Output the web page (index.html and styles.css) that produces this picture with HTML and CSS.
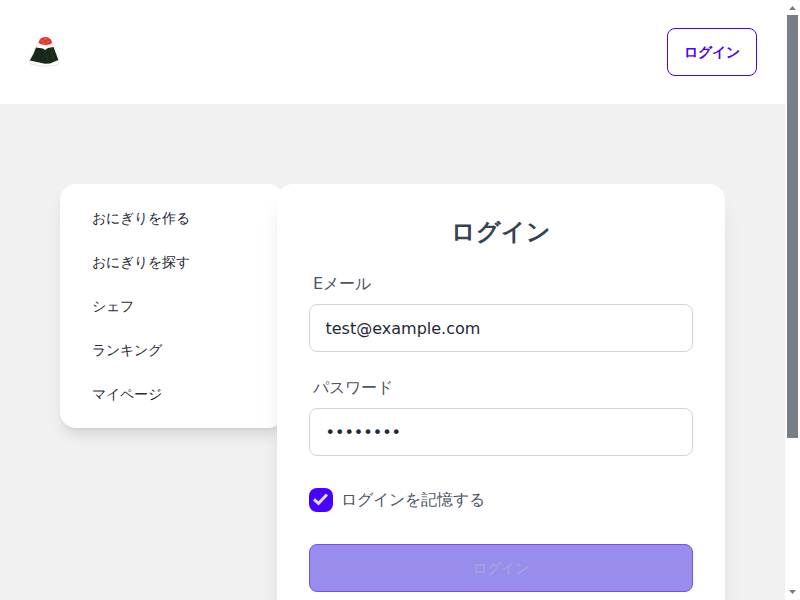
FILE: index.html
```
<!DOCTYPE html>
<html lang="ja">
<head>
<meta charset="utf-8">
<title>ログイン</title>
<link rel="stylesheet" href="styles.css">
</head>
<body>
<div class="viewport">
  <div class="page">
    <header class="navbar">
      <a class="logo" href="#" aria-label="ホーム">
        <svg width="32" height="32" viewBox="0 0 32 32">
          <path d="M11 4 Q10 7 8.500 10 L1.500 24.500 Q.8 28 4 28.500 Q16 31.500 27 29.500 Q31.500 28 31 25 L25 10 Q23 4 17 3Z" fill="#fdfdfb" stroke="#deded6" stroke-width=".7"/>
          <path d="M8 11.500 L15 12.500 L17 14 L20 12 L25.500 11 L30.300 24 L22 27.500 L17 27.800 L1.800 24.500 Q6 18 8 11.500Z" fill="#1a281b"/>
          <path d="M17 14 L20 25M23 12 L26 24" stroke="#3b493b" stroke-width=".5" fill="none"/>
          <path d="M10.500 7 Q11.500 1 17 1 Q22.500 1 24 6 Q23.500 9 19.500 8.700 Q15 9.700 10.500 7Z" fill="#e5372f"/>
          <path d="M13 5h2M16 3h3M15 7h2M19 6h2" stroke="#f46c5d" stroke-width="1"/>
        </svg>
      </a>
      <button class="btn btn-outline" type="button">ログイン</button>
    </header>
    <main class="content">
      <nav class="menu">
        <a href="#">おにぎりを作る</a>
        <a href="#">おにぎりを探す</a>
        <a href="#">シェフ</a>
        <a href="#">ランキング</a>
        <a href="#">マイページ</a>
      </nav>
      <form class="card">
        <h1>ログイン</h1>
        <label class="label" for="email">Eメール</label>
        <input class="input" id="email" type="text" value="test@example.com">
        <label class="label label-next" for="password">パスワード</label>
        <input class="input" id="password" type="password" value="password">
        <label class="remember"><span class="checkbox"><svg width="24" height="24" viewBox="0 0 24 24"><path d="M5 11.300 9.500 15.300 18 6.500" fill="none" stroke="#d9ddff" stroke-width="3"/></svg></span>ログインを記憶する</label>
        <button class="btn btn-submit" type="button">ログイン</button>
      </form>
    </main>
  </div>
  <div class="scrollbar">
    <svg class="arrow" width="15" height="15" viewBox="0 0 15 15"><path d="M4 10 7.500 6 11 10Z" fill="#767e88"/></svg>
    <div class="thumb"></div>
    <svg class="arrow arrow-down" width="15" height="15" viewBox="0 0 15 15"><path d="M4 5 7.500 9 11 5Z" fill="#767e88"/></svg>
  </div>
</div>
</body>
</html>
```
FILE: styles.css
```
* { box-sizing: border-box; }
body {
  margin: 0;
  overflow: hidden;
  font: 16px/24px "DejaVu Sans", system-ui, sans-serif;
  color: #1f2937;
}
.viewport { display: flex; height: 600px; overflow: hidden; }
.page { flex: 1; background: #f1f1f1; overflow: hidden; }
.navbar {
  display: flex;
  align-items: center;
  justify-content: space-between;
  height: 104px;
  padding: 0 28px;
  background: #fff;
}
.logo { display: flex; }
.btn {
  height: 48px;
  padding: 0 16px;
  border: 1px solid #4a00ff;
  border-radius: 8px;
  font-family: inherit;
  font-size: 14px;
  line-height: 14px;
  font-weight: 600;
}
.btn-outline { background: transparent; color: #4a00ff; }
.content { display: flex; align-items: flex-start; padding: 80px 60px 0; }
.menu {
  display: flex;
  flex-direction: column;
  gap: 8px;
  flex: 0 0 224px;
  padding: 16px;
  border-radius: 16px;
  background: #fff;
  box-shadow: 0 10px 15px -3px rgb(0 0 0 / .1), 0 4px 6px -4px rgb(0 0 0 / .1);
}
.menu a {
  height: 36px;
  padding: 8px 16px;
  font-size: 14px;
  line-height: 20px;
  color: inherit;
  text-decoration: none;
}
.card {
  position: relative;
  display: flex;
  flex-direction: column;
  flex: 0 0 448px;
  height: 520px;
  margin-left: -7px;
  padding: 32px;
  border-radius: 16px;
  background: #fff;
  box-shadow: 0 20px 25px -5px rgb(0 0 0 / .1), 0 8px 10px -6px rgb(0 0 0 / .1);
}
h1 {
  margin: 0 0 16px;
  font-size: 24px;
  line-height: 32px;
  font-weight: 600;
  text-align: center;
  color: #374151;
}
.label { padding: 8px 4px; color: #4b5563; }
.label-next { margin-top: 16px; }
.input {
  width: 100%;
  height: 48px;
  padding: 0 15.5px;
  border: 1px solid #d2d4d7;
  border-radius: 8px;
  background: #fff;
  font: inherit;
  color: inherit;
  outline: none;
}
.remember {
  display: flex;
  align-items: center;
  gap: 8px;
  margin: 32px 0;
  color: #4b5563;
}
.checkbox { display: flex; width: 24px; height: 24px; border-radius: 8px; background: #4a00ff; }
.btn-submit { background: #988dec; border-color: #7650f0; color: #a4a0de; }
.scrollbar { display: flex; flex-direction: column; align-items: center; width: 15px; background: #fff; }
.thumb { width: 11px; height: 423px; margin-bottom: auto; background: #767e88; }
.arrow { display: block; }
```
